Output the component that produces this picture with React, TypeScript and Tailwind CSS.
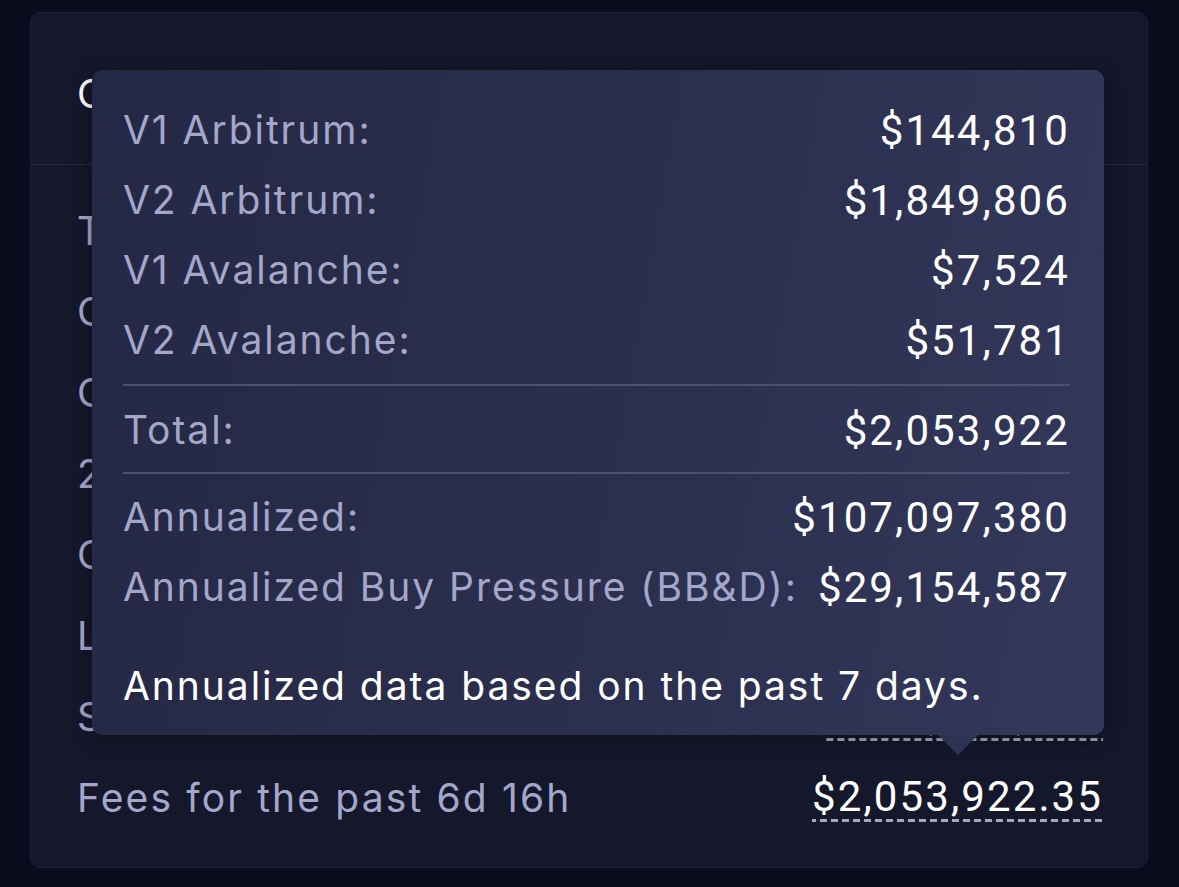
import React from "react";

const labelFont = { fontFamily: "Inter, 'Noto Sans', sans-serif" };
const numFont = { fontFamily: "Roboto, 'Liberation Sans', sans-serif" };

const rows = [
  { label: "Total Value Locked", value: "$614,202,118" },
  { label: "GLP Pool", value: "$452,731,906" },
  { label: "GM Pools", value: "$161,470,212" },
  { label: "24h Volume", value: "$98,215,402" },
  { label: "Open Interest", value: "$212,104,350" },
  { label: "Long Positions", value: "$108,450,140" },
  { label: "Short Positions", value: "$103,654,210" },
  { label: "Fees for the past 6d 16h", value: "$2,053,922.35" },
];

const tipRows1 = [
  ["V1 Arbitrum:", "$144,810"],
  ["V2 Arbitrum:", "$1,849,806"],
  ["V1 Avalanche:", "$7,524"],
  ["V2 Avalanche:", "$51,781"],
];

function TipRow({ label, value }: { label: string; value: string }) {
  return (
    <div className="flex h-[70px] items-center justify-between">
      <span
        className="text-[39px] tracking-[0.05em] text-[#a4a7cb]"
        style={labelFont}
      >
        {label}
      </span>
      <span
        className="text-[42px] tracking-[0.05em] text-white"
        style={numFont}
      >
        {value}
      </span>
    </div>
  );
}

export default function App() {
  return (
    <div className="min-h-[887px] w-full bg-[#0a0b1d] pl-[30px] pr-[31px] pt-[12px] pb-[20px]">
      <div className="relative rounded-[10px] border border-[#1c1e34] bg-[#15172b]">
        <div className="flex h-[151px] items-center px-[46px] pt-[12px]">
          <span
            className="text-[39px] tracking-[0.04em] text-white"
            style={labelFont}
          >
            Overview
          </span>
        </div>
        <div className="h-px bg-[#25273f]" />
        <div className="pl-[46px] pr-[44px] pt-[26px] pb-[28px]">
          {rows.map((r) => (
            <div key={r.label} className="flex h-[81px] items-center justify-between">
              <span
                className="text-[39px] tracking-[0.055em] text-[#a4a7cb]"
                style={labelFont}
              >
                {r.label}
              </span>
              <span
                className="bg-[linear-gradient(to_right,#a6a8bc_60%,transparent_60%)] bg-[length:11px_3px] bg-bottom bg-repeat-x pb-[3px] text-[42px] leading-[44px] tracking-[0.05em] text-white"
                style={numFont}
              >
                {r.value}
              </span>
            </div>
          ))}
        </div>

        <div className="absolute left-[61px] top-[57px] w-[1012px] rounded-[10px] bg-[linear-gradient(100deg,#242844_0%,#2b2f4d_50%,#33375a_100%)] pl-[31px] pr-[34px] pt-[25px] pb-[24px] shadow-[0_4px_20px_rgba(0,0,0,0.35)]">
          {tipRows1.map(([l, v]) => (
            <TipRow key={l} label={l} value={v} />
          ))}
          <div className="mt-[9px] mb-[9px] h-[2px] bg-[#4d516e]" />
          <TipRow label="Total:" value="$2,053,922" />
          <div className="mt-[7px] mb-[8px] h-[2px] bg-[#4d516e]" />
          <TipRow label="Annualized:" value="$107,097,380" />
          <TipRow label="Annualized Buy Pressure (BB&D):" value="$29,154,587" />
          <div
            className="mt-[39px] flex h-[50px] items-center text-[39px] tracking-[0.05em] text-white"
            style={labelFont}
          >
            Annualized data based on the past 7 days.
          </div>
          <div className="absolute bottom-[-20px] left-[846px] h-0 w-0 border-l-[20px] border-r-[20px] border-t-[20px] border-l-transparent border-r-transparent border-t-[#2f3352]" />
        </div>
      </div>
    </div>
  );
}
